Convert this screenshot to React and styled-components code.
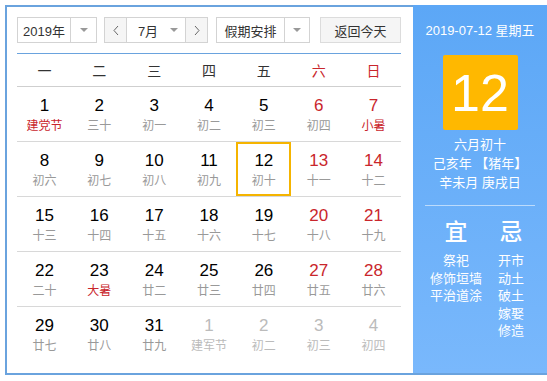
import React from "react";
import styled, { createGlobalStyle } from "styled-components";

const GlobalStyle = createGlobalStyle`
  body {
    margin: 0;
    background: #fff;
    font-family: "Liberation Sans", "Noto Sans CJK SC", sans-serif;
  }
`;

const Frame = styled.div`
  margin: 5px 0 0 5px;
  width: 540px;
  height: 366px;
  display: flex;
  border: 2px solid #6aa3de;
  border-right: none;
`;

const Main = styled.div`
  width: 384px;
  padding: 10px 12px 0 10px;
`;

const Toolbar = styled.div`
  display: flex;
  align-items: center;
  height: 26px;
`;

const Select = styled.div`
  display: flex;
  height: 26px;
  box-sizing: border-box;
  width: ${(p) => p.w}px;
  margin-right: ${(p) => p.mr || 0}px;
  border: 1px solid #d3d3d3;
  background: #fff;
  font-size: 13px;
  color: #333;
`;

const SelectText = styled.div`
  flex: 1;
  display: flex;
  align-items: center;
  justify-content: center;
  padding-left: ${(p) => p.pl || 0}px;
`;

const ArrowBox = styled.div`
  width: ${(p) => p.w}px;
  border-left: ${(p) => (p.plain ? "none" : "1px solid #d3d3d3")};
  display: flex;
  align-items: center;
  justify-content: center;
  &::after {
    content: "";
    border-left: 4px solid transparent;
    border-right: 4px solid transparent;
    border-top: 4px solid #999;
  }
`;

const NavButton = styled.div`
  width: 21px;
  background: #f5f5f5;
  display: flex;
  align-items: center;
  justify-content: center;
  border-left: ${(p) => (p.side === "right" ? "1px solid #d3d3d3" : "none")};
  border-right: ${(p) => (p.side === "left" ? "1px solid #d3d3d3" : "none")};
`;

const TodayButton = styled.div`
  margin-left: auto;
  width: 81px;
  height: 26px;
  box-sizing: border-box;
  border: 1px solid #dcdcdc;
  background: #f5f5f5;
  font-size: 13px;
  color: #333;
  display: flex;
  align-items: center;
  justify-content: center;
`;

const WeekHead = styled.div`
  margin-top: 10px;
  border-top: 1px solid #6aa3de;
  border-bottom: 1px solid #cfcfcf;
  height: 32px;
  display: grid;
  grid-template-columns: repeat(7, 1fr);
  align-items: center;
  text-align: center;
  font-size: 14px;
`;

const WeekName = styled.div`
  color: ${(p) => (p.red ? "#c9262c" : "#333")};
`;

const Week = styled.div`
  display: grid;
  grid-template-columns: repeat(7, 1fr);
  height: 54px;
  border-bottom: ${(p) => (p.last ? "none" : "1px solid #d8d8d8")};
`;

const Day = styled.div`
  box-sizing: border-box;
  text-align: center;
  padding-top: ${(p) => (p.today ? 7 : 9)}px;
  border: ${(p) => (p.today ? "2px solid #f5b400" : "none")};
  height: 54px;
`;

const Num = styled.div`
  font-size: 17px;
  line-height: 20px;
  color: ${(p) => (p.other ? "#bbb" : p.red ? "#c9262c" : "#000")};
`;

const Lunar = styled.div`
  font-size: 12px;
  line-height: 20px;
  color: ${(p) => (p.other ? "#bbb" : p.red ? "#c9262c" : "#999")};
`;

const Panel = styled.div`
  flex: 1;
  margin-top: -2px;
  height: 368px;
  background: linear-gradient(#5ca7f6, #79b8fc);
  color: #fff;
  display: flex;
  flex-direction: column;
  align-items: center;
  padding-top: 16px;
  box-sizing: border-box;
`;

const DateLine = styled.div`
  font-size: 13px;
  line-height: 20px;
`;

const BigDay = styled.div`
  margin-top: 14px;
  width: 75px;
  height: 75px;
  background: #ffb800;
  border-radius: 2px;
  display: flex;
  align-items: center;
  justify-content: center;
  font-size: 52px;
  color: #fff;
`;

const LunarInfo = styled.div`
  margin-top: 5px;
  font-size: 13px;
  line-height: 19px;
  text-align: center;
`;

const Divider = styled.div`
  margin-top: 13px;
  width: 110px;
  height: 1px;
  background: rgba(255, 255, 255, 0.55);
`;

const Almanac = styled.div`
  margin-top: 11px;
  display: grid;
  grid-template-columns: 62px 48px;
  text-align: center;
`;

const AlmanacCol = styled.div`
  display: flex;
  flex-direction: column;
  align-items: center;
`;

const AlmanacHead = styled.div`
  font-size: 23px;
  line-height: 30px;
  font-weight: 500;
`;

const AlmanacList = styled.div`
  margin-top: 5px;
  font-size: 13px;
  line-height: 17.5px;
`;

function Chevron({ dir }) {
  return (
    <svg width="6" height="11" viewBox="0 0 6 11">
      <polyline
        points={dir === "left" ? "5,1 1,5.5 5,10" : "1,1 5,5.5 1,10"}
        fill="none"
        stroke="#666"
        strokeWidth="1"
      />
    </svg>
  );
}

const weekNames = ["一", "二", "三", "四", "五", "六", "日"];

const weeks = [
  [
    ["1", "建党节", "r"],
    ["2", "三十"],
    ["3", "初一"],
    ["4", "初二"],
    ["5", "初三"],
    ["6", "初四"],
    ["7", "小暑", "r"],
  ],
  [
    ["8", "初六"],
    ["9", "初七"],
    ["10", "初八"],
    ["11", "初九"],
    ["12", "初十", "t"],
    ["13", "十一"],
    ["14", "十二"],
  ],
  [
    ["15", "十三"],
    ["16", "十四"],
    ["17", "十五"],
    ["18", "十六"],
    ["19", "十七"],
    ["20", "十八"],
    ["21", "十九"],
  ],
  [
    ["22", "二十"],
    ["23", "大暑", "r"],
    ["24", "廿二"],
    ["25", "廿三"],
    ["26", "廿四"],
    ["27", "廿五"],
    ["28", "廿六"],
  ],
  [
    ["29", "廿七"],
    ["30", "廿八"],
    ["31", "廿九"],
    ["1", "建军节", "o"],
    ["2", "初二", "o"],
    ["3", "初三", "o"],
    ["4", "初四", "o"],
  ],
];

function App() {
  return (
    <>
      <GlobalStyle />
      <Frame>
        <Main>
          <Toolbar>
            <Select w={80} mr={7}>
              <SelectText>2019年</SelectText>
              <ArrowBox w={25} />
            </Select>
            <Select w={104} mr={8}>
              <NavButton side="left">
                <Chevron dir="left" />
              </NavButton>
              <SelectText pl={6}>7月</SelectText>
              <ArrowBox w={22} plain />
              <NavButton side="right">
                <Chevron dir="right" />
              </NavButton>
            </Select>
            <Select w={94}>
              <SelectText>假期安排</SelectText>
              <ArrowBox w={24} />
            </Select>
            <TodayButton>返回今天</TodayButton>
          </Toolbar>
          <WeekHead>
            {weekNames.map((n, i) => (
              <WeekName key={n} red={i >= 5}>
                {n}
              </WeekName>
            ))}
          </WeekHead>
          {weeks.map((week, wi) => (
            <Week key={wi} last={wi === weeks.length - 1}>
              {week.map(([num, lunar, flag], di) => (
                <Day key={di} today={flag === "t"}>
                  <Num red={di >= 5} other={flag === "o"}>
                    {num}
                  </Num>
                  <Lunar red={flag === "r"} other={flag === "o"}>
                    {lunar}
                  </Lunar>
                </Day>
              ))}
            </Week>
          ))}
        </Main>
        <Panel>
          <DateLine>2019-07-12 星期五</DateLine>
          <BigDay>12</BigDay>
          <LunarInfo>
            六月初十
            <br />
            己亥年 【猪年】
            <br />
            辛未月 庚戌日
          </LunarInfo>
          <Divider />
          <Almanac>
            <AlmanacCol>
              <AlmanacHead>宜</AlmanacHead>
              <AlmanacList>
                祭祀
                <br />
                修饰垣墙
                <br />
                平治道涂
              </AlmanacList>
            </AlmanacCol>
            <AlmanacCol>
              <AlmanacHead>忌</AlmanacHead>
              <AlmanacList>
                开市
                <br />
                动土
                <br />
                破土
                <br />
                嫁娶
                <br />
                修造
              </AlmanacList>
            </AlmanacCol>
          </Almanac>
        </Panel>
      </Frame>
    </>
  );
}

export default App;
